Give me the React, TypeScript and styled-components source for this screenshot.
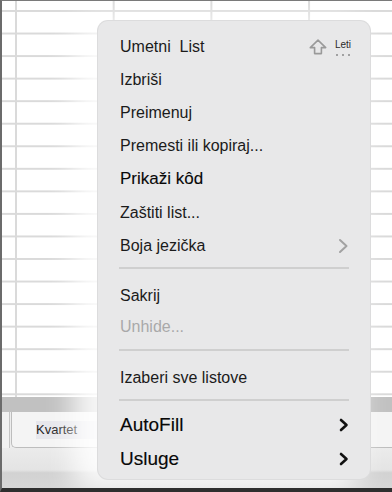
import styled, { createGlobalStyle } from 'styled-components'

const GlobalStyle = createGlobalStyle`
  html, body {
    margin: 0;
    padding: 0;
    background: #ffffff;
  }
  body {
    font-family: 'Liberation Sans', Arial, sans-serif;
  }
`

const Frame = styled.div`
  position: relative;
  box-sizing: border-box;
  width: 392px;
  height: 492px;
  display: flex;
  flex-direction: column;
  overflow: hidden;
  border-left: 2px solid #6b6b6b;
  border-top: 1px solid #7a7a7a;
  border-bottom: 4px solid #2e2e2e;
  background: #ffffff;
`

const Sheet = styled.div`
  height: 396px;
  flex: none;
  background-color: #ffffff;
  background-image:
    linear-gradient(to right, #dadada 0 2px, transparent 2px),
    linear-gradient(to bottom, #dadada 0 2px, transparent 2px);
  background-size: 97.7px 100%, 100% 22.56px;
  background-position: 13px 0, 0 9px;
`

const TabBand = styled.div`
  height: 15px;
  flex: none;
  background: #c1c1c1;
`

const TabRow = styled.div`
  height: 36px;
  flex: none;
  display: flex;
  background: #ededed;
`

const TabStub = styled.div`
  width: 7px;
  border-right: 1px solid #c4c4c4;
  background: #f1f1f1;
`

const Tab = styled.div`
  flex: 1;
  margin-left: 1px;
  display: flex;
  align-items: center;
  padding-left: 24px;
  border-left: 1px solid #bdbdbd;
  border-bottom: 1px solid #bdbdbd;
  border-bottom-left-radius: 5px;
  background: #f4f4f4;
`

const TabLabel = styled.span`
  font-size: 13px;
  color: #1e1e1e;
  background: #e7e7ec;
  padding: 1px 30px 2px 0;
`

const Footer = styled.div`
  flex: 1;
  background: linear-gradient(to bottom, #ebebeb 0%, #e4e4e4 55%, #d2d2d2 62%, #d6d6d6 100%);
`

const Menu = styled.div`
  position: absolute;
  left: 95px;
  top: 19px;
  width: 274px;
  height: 460px;
  box-sizing: border-box;
  padding: 9px 0 5px;
  display: flex;
  flex-direction: column;
  background: #e8e8e9;
  border: 1px solid rgba(0, 0, 0, 0.05);
  border-radius: 11px;
  box-shadow: -18px 6px 28px 6px rgba(255, 255, 255, 0.85);
`

const Item = styled.div<{ $h?: number }>`
  height: ${(p) => p.$h ?? 33.2}px;
  flex: none;
  display: flex;
  align-items: center;
  padding: 0 21px 0 22px;
`

const Label = styled.span<{ $size?: number; $muted?: boolean; $stroke?: number }>`
  flex: 1;
  font-size: ${(p) => p.$size ?? 16}px;
  color: ${(p) => (p.$muted ? '#a9a9a9' : p.$stroke ? '#080808' : '#1b1b1b')};
  -webkit-text-stroke: ${(p) => (p.$stroke ? `${p.$stroke}px #080808` : '0')};
  white-space: pre;
`

const Separator = styled.div<{ $top: number; $bottom: number }>`
  height: 2px;
  flex: none;
  margin: ${(p) => p.$top}px 21px ${(p) => p.$bottom}px;
  background: #cfcfcf;
`

const Shortcut = styled.div`
  display: flex;
  align-items: flex-start;
  gap: 8px;
  margin-right: -2px;
  margin-top: 2px;
`

const ShortcutText = styled.div`
  display: flex;
  flex-direction: column;
  align-items: center;
  gap: 4px;
  font-size: 10px;
  line-height: 11px;
  color: #2a2a2a;
`

const DotRow = styled.div`
  display: flex;
  gap: 4px;
`

const Dot = styled.span`
  width: 2px;
  height: 2px;
  border-radius: 50%;
  background: #8a8a8a;
`

function ShiftIcon() {
  return (
    <svg width="18" height="16" viewBox="0 0 18 16">
      <path
        d="M9 1.2 L1.3 8.6 H5.6 V14.6 H12.4 V8.6 H16.7 Z"
        fill="none"
        stroke="#9a9a9a"
        strokeWidth="1.6"
        strokeLinejoin="round"
      />
    </svg>
  )
}

function Chevron({ dark }: { dark?: boolean }) {
  return dark ? (
    <svg width="10" height="14" viewBox="0 0 10 14">
      <polyline
        points="2,2 7.5,7 2,12"
        fill="none"
        stroke="#111111"
        strokeWidth="2.6"
        strokeLinecap="round"
        strokeLinejoin="round"
      />
    </svg>
  ) : (
    <svg width="11" height="16" viewBox="0 0 11 16">
      <polyline
        points="2,2 8.5,8 2,14"
        fill="none"
        stroke="#a2a2a2"
        strokeWidth="2"
        strokeLinecap="round"
        strokeLinejoin="round"
      />
    </svg>
  )
}

export default function App() {
  return (
    <>
      <GlobalStyle />
      <Frame>
        <Sheet />
        <TabBand />
        <TabRow>
          <TabStub />
          <Tab>
            <TabLabel>Kvartet</TabLabel>
          </Tab>
        </TabRow>
        <Footer />

        <Menu>
          <Item>
            <Label>{'Umetni  List'}</Label>
            <Shortcut>
              <ShiftIcon />
              <ShortcutText>
                <span>Leti</span>
                <DotRow>
                  <Dot />
                  <Dot />
                  <Dot />
                </DotRow>
              </ShortcutText>
            </Shortcut>
          </Item>
          <Item>
            <Label>Izbriši</Label>
          </Item>
          <Item>
            <Label>Preimenuj</Label>
          </Item>
          <Item>
            <Label>Premesti ili kopiraj...</Label>
          </Item>
          <Item>
            <Label $size={17} $stroke={0.1}>
              Prikaži kôd
            </Label>
          </Item>
          <Item>
            <Label>Zaštiti list...</Label>
          </Item>
          <Item>
            <Label>Boja jezička</Label>
            <Chevron />
          </Item>
          <Separator $top={5} $bottom={11} />
          <Item $h={31}>
            <Label>Sakrij</Label>
          </Item>
          <Item $h={31}>
            <Label $muted>Unhide...</Label>
          </Item>
          <Separator $top={7} $bottom={11} />
          <Item $h={31}>
            <Label>Izaberi sve listove</Label>
          </Item>
          <Separator $top={6} $bottom={6.5} />
          <Item $h={34}>
            <Label $size={19} $stroke={0.15}>
              AutoFill
            </Label>
            <Chevron dark />
          </Item>
          <Item $h={34}>
            <Label $size={19} $stroke={0.15}>
              Usluge
            </Label>
            <Chevron dark />
          </Item>
        </Menu>
      </Frame>
    </>
  )
}
